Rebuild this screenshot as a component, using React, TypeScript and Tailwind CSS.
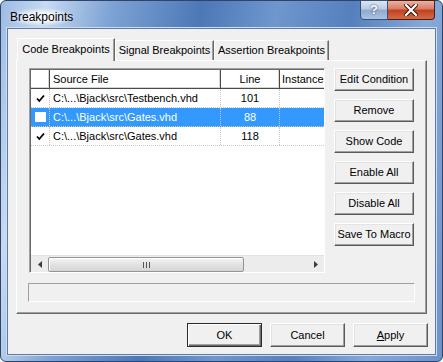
import React from "react";

const font = "font-['Liberation_Sans',Arial,sans-serif] text-[11px] text-black";

const raised =
  "bg-[#f0f0f0] border border-t-white border-l-white border-r-[#5a5a5a] border-b-[#5a5a5a] shadow-[inset_-1px_-1px_0_#a0a0a0,inset_1px_1px_0_#e3e3e3]";

function SideButton({ label }: { label: string }) {
  return (
    <button className={`${raised} h-[23px] w-[80px] flex items-center justify-center`}>
      {label}
    </button>
  );
}

function DialogButton({ children, isDefault }: { children: React.ReactNode; isDefault?: boolean }) {
  return (
    <button
      className={`h-[24px] w-[75px] flex items-center justify-center bg-[#f0f0f0] border ${
        isDefault
          ? "border-[#2b2b2b] shadow-[inset_1px_1px_0_#fff,inset_-1px_-1px_0_#6a6a6a,inset_-2px_-2px_0_#a0a0a0]"
          : "border-t-white border-l-white border-r-[#5a5a5a] border-b-[#5a5a5a] shadow-[inset_-1px_-1px_0_#a0a0a0,inset_1px_1px_0_#e3e3e3]"
      }`}>
      {children}
    </button>
  );
}

function Check() {
  return (
    <svg width="9" height="9" viewBox="0 0 9 9">
      <path d="M1 4.5 L3.3 7 L8 1.5" fill="none" stroke="#000" strokeWidth="1.8" />
    </svg>
  );
}

const rows = [
  { checked: true, file: "C:\\...\\Bjack\\src\\Testbench.vhd", line: "101", selected: false },
  { checked: false, file: "C:\\...\\Bjack\\src\\Gates.vhd", line: "88", selected: true },
  { checked: true, file: "C:\\...\\Bjack\\src\\Gates.vhd", line: "118", selected: false },
];

function HeaderCell({ children, className }: { children?: React.ReactNode; className: string }) {
  return (
    <div
      className={`h-[19px] shrink-0 flex items-center bg-white border-r border-b border-[#4a4a4a] shadow-[inset_-1px_-1px_0_#d5d5d5] ${className}`}>
      {children}
    </div>
  );
}

function BreakpointList() {
  return (
    <div className="w-[296px] h-[205px] bg-white border border-t-[#a0a0a0] border-l-[#a0a0a0] border-r-white border-b-white shadow-[inset_1px_1px_0_#696969] flex flex-col overflow-hidden pl-px pt-px">
      <div className="flex">
        <HeaderCell className="w-[19px]" />
        <HeaderCell className="w-[171px] pl-[3px]">Source File</HeaderCell>
        <HeaderCell className="w-[59px] justify-center">Line</HeaderCell>
        <HeaderCell className="w-[60px] pl-[2px] whitespace-nowrap overflow-hidden">Instance</HeaderCell>
      </div>
      <div className="flex-1">
        {rows.map((r, i) => (
          <div
            key={i}
            className={`flex h-[19px] border-b border-dotted border-[#c8c8c8] ${
              r.selected ? "bg-[#3399ff] text-white" : ""
            }`}>
            <div className="w-[19px] shrink-0 flex items-center justify-center border-r border-dotted border-[#c8c8c8]">
              {r.selected ? <div className="w-[11px] h-[10px] bg-white" /> : r.checked ? <Check /> : null}
            </div>
            <div className="w-[171px] shrink-0 pl-[3px] flex items-center border-r border-dotted border-[#c8c8c8] whitespace-nowrap">
              {r.file}
            </div>
            <div className="w-[59px] shrink-0 flex items-center justify-center border-r border-dotted border-[#c8c8c8]">
              {r.line}
            </div>
            <div className="w-[60px] shrink-0" />
          </div>
        ))}
      </div>
      <div className="h-[17px] flex bg-[#ececec] border-t border-[#e2e2e2]">
        <div className="w-[17px] flex items-center justify-center">
          <svg width="4" height="7" viewBox="0 0 4 7">
            <path d="M4 0 L0 3.5 L4 7 Z" fill="#3c3c3c" />
          </svg>
        </div>
        <div className="w-[196px] h-[15px] mt-px rounded-[2px] border border-[#959595] bg-[linear-gradient(#f4f4f4,#e2e2e2_50%,#d5d5d5)] flex items-center justify-center gap-[2px] shadow-[inset_1px_1px_0_#fff]">
          <div className="w-px h-[6px] bg-[#555]" />
          <div className="w-px h-[6px] bg-[#555]" />
          <div className="w-px h-[6px] bg-[#555]" />
        </div>
        <div className="flex-1" />
        <div className="w-[17px] flex items-center justify-center">
          <svg width="4" height="7" viewBox="0 0 4 7">
            <path d="M0 0 L4 3.5 L0 7 Z" fill="#3c3c3c" />
          </svg>
        </div>
      </div>
    </div>
  );
}

function Tabs() {
  return (
    <div className="flex items-end h-[22px] ml-[9px]">
      <div className="relative z-10 h-[23px] -mb-px w-[98px] bg-[#f0f0f0] border border-b-0 border-t-white border-l-white border-r-[#696969] shadow-[inset_-1px_0_0_#a0a0a0] flex items-center justify-center pb-[2px]">
        Code Breakpoints
      </div>
      <div className="h-[20px] w-[99px] bg-[#f0f0f0] border border-b-0 border-t-white border-l-white border-r-[#696969] shadow-[inset_-1px_0_0_#a0a0a0] flex items-center justify-center">
        Signal Breakpoints
      </div>
      <div className="h-[20px] w-[115px] bg-[#f0f0f0] border border-b-0 border-t-white border-l-white border-r-[#696969] shadow-[inset_-1px_0_0_#a0a0a0] flex items-center justify-center">
        Assertion Breakpoints
      </div>
    </div>
  );
}

export default function App() {
  return (
    <div className={`${font} w-[443px] h-[362px] flex flex-col rounded-[6px] border border-[#2f4468] px-[6px] pb-[6px] bg-[linear-gradient(100deg,#9cbbe3_0%,#c7daf1_9%,#7ea3d4_22%,#4c78b6_40%,#6f97cd_55%,#5580bd_70%,#86a9d8_85%,#6d92c8_100%)]`}>
      <div className="h-[27px] flex items-start">
        <div className="mt-[7px] ml-px px-[2px] text-[12px] bg-[radial-gradient(ellipse_at_center,rgba(255,255,255,0.85)_30%,rgba(255,255,255,0)_72%)]">
          Breakpoints
        </div>
        <div className="flex-1" />
        <div className="flex -mt-px mr-px">
          <div className="w-[28px] h-[20px] rounded-bl-[4px] border border-[#3b4f72] bg-[linear-gradient(#dbe6f4,#b7cbe6_45%,#8fa9cf_50%,#a9c3e6)] flex items-center justify-center text-white font-bold text-[13px] [text-shadow:0_0_2px_#223]">
            ?
          </div>
          <div className="w-[47px] h-[20px] rounded-br-[4px] border border-l-0 border-[#4a1f1a] bg-[linear-gradient(#eab2a4,#d77b62_45%,#c2401f_50%,#d56a45)] flex items-center justify-center">
            <svg width="14" height="12" viewBox="0 0 14 12">
              <path d="M2 1 L12 11 M12 1 L2 11" stroke="#3a1410" strokeWidth="4.2" strokeLinecap="square" />
              <path d="M2 1 L12 11 M12 1 L2 11" stroke="#fff" strokeWidth="2.2" strokeLinecap="square" />
            </svg>
          </div>
        </div>
      </div>
      <div className="flex-1 flex flex-col bg-[#f0f0f0] border border-[#5e7ba6] shadow-[0_0_0_1px_#cfdcee]">
        <div className="pt-[9px]">
          <Tabs />
        </div>
        <div className="ml-[8px] w-[411px] h-[254px] border border-t-white border-l-white border-r-[#696969] border-b-[#696969] shadow-[inset_-1px_-1px_0_#a0a0a0] pl-[12px] pt-[7px]">
          <div className="flex gap-[9px]">
            <BreakpointList />
            <div className="flex flex-col gap-[8px]">
              <SideButton label="Edit Condition" />
              <SideButton label="Remove" />
              <SideButton label="Show Code" />
              <SideButton label="Enable All" />
              <SideButton label="Disable All" />
              <SideButton label="Save To Macro" />
            </div>
          </div>
          <div className="mt-[10px] -ml-px w-[387px] h-[19px] border border-t-[#a0a0a0] border-l-[#a0a0a0] border-r-white border-b-white" />
        </div>
        <div className="mt-[9px] flex justify-end gap-[8px] pr-[7px]">
          <DialogButton isDefault>OK</DialogButton>
          <DialogButton>Cancel</DialogButton>
          <DialogButton>
            <span>
              <span className="underline">A</span>pply
            </span>
          </DialogButton>
        </div>
      </div>
    </div>
  );
}
